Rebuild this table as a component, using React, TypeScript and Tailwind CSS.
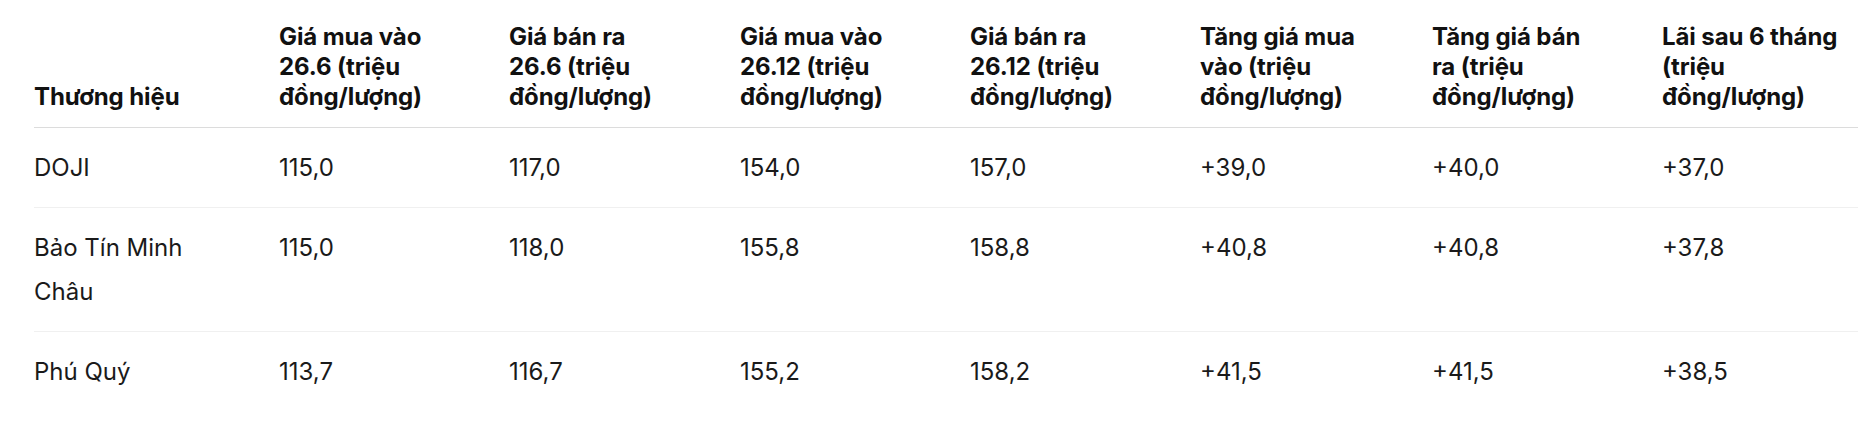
const columns = [
  { width: "w-[245px]", lines: ["Thương hiệu"] },
  { width: "w-[230px]", lines: ["Giá mua vào", "26.6 (triệu", "đồng/lượng)"] },
  { width: "w-[231px]", lines: ["Giá bán ra", "26.6 (triệu", "đồng/lượng)"] },
  { width: "w-[230px]", lines: ["Giá mua vào", "26.12 (triệu", "đồng/lượng)"] },
  { width: "w-[230px]", lines: ["Giá bán ra", "26.12 (triệu", "đồng/lượng)"] },
  { width: "w-[232px]", lines: ["Tăng giá mua", "vào (triệu", "đồng/lượng)"] },
  { width: "w-[230px]", lines: ["Tăng giá bán", "ra (triệu", "đồng/lượng)"] },
  { width: "w-[250px]", lines: ["Lãi sau 6 tháng", "(triệu", "đồng/lượng)"] },
];

const rows = [
  ["DOJI", "115,0", "117,0", "154,0", "157,0", "+39,0", "+40,0", "+37,0"],
  ["Bảo Tín Minh Châu", "115,0", "118,0", "155,8", "158,8", "+40,8", "+40,8", "+37,8"],
  ["Phú Quý", "113,7", "116,7", "155,2", "158,2", "+41,5", "+41,5", "+38,5"],
];

export default function App() {
  return (
    <div className="w-full overflow-hidden bg-white pl-[34px] font-['Inter','Noto_Sans',sans-serif] text-[#1a1a1a]">
      <table className="w-[1878px] table-fixed border-collapse">
        <colgroup>
          {columns.map((col, i) => (
            <col key={i} className={col.width} />
          ))}
        </colgroup>
        <thead>
          <tr className="border-b border-[#dcdcdc]">
            {columns.map((col, i) => (
              <th
                key={i}
                className="pt-[22px] pb-[15px] pr-4 text-left align-bottom text-[24px] font-bold leading-[30px] tracking-[-0.1px] text-[#111]"
              >
                {col.lines.map((line, j) => (
                  <span key={j} className="block whitespace-nowrap">
                    {line}
                  </span>
                ))}
              </th>
            ))}
          </tr>
        </thead>
        <tbody>
          {rows.map((row, i) => (
            <tr key={i} className="border-b border-[#f0f0f0] last:border-b-0">
              {row.map((cell, j) => (
                <td
                  key={j}
                  className={
                    j === 0
                      ? "pt-[18px] pb-[17px] pr-[60px] align-top text-[24px] leading-[44px]"
                      : "pt-[18px] pb-[17px] pr-4 align-top text-[24px] leading-[44px]"
                  }
                >
                  {cell}
                </td>
              ))}
            </tr>
          ))}
        </tbody>
      </table>
    </div>
  );
}
